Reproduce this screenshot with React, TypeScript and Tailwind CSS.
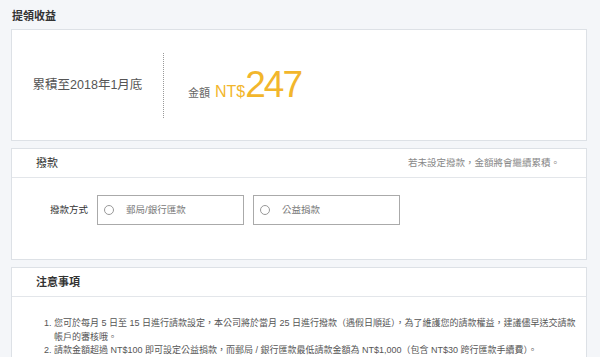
export default function App() {
  return (
    <div className="h-[357px] w-[600px] overflow-hidden bg-[#f4f6f9] pl-[11px] pr-[13px] text-[#333] [font-family:'Liberation_Sans','Noto_Sans_CJK_TC',sans-serif]">
      <h2 className="pl-px pt-[9px] pb-[5px] text-[11px] font-bold leading-[15px] text-[#333]">提領收益</h2>

      <section className="flex h-[112px] items-center border border-[#dde1e6] bg-white">
        <div className="flex w-[151px] justify-center text-[12.5px] text-[#555]">累積至2018年1月底</div>
        <div className="h-[65px] border-l border-dotted border-[#999]" />
        <div className="flex items-baseline pl-[24px] text-[#f2b62c]">
          <span className="text-[11px] text-[#666]">金額</span>
          <span className="ml-[5px] text-[16px]">NT$</span>
          <span className="text-[37px] leading-none tracking-[-2px]">247</span>
        </div>
      </section>

      <section className="mt-[7px] h-[112px] border border-[#dde1e6] bg-white">
        <div className="flex h-[29px] items-center justify-between border-b border-[#e3e6ea] pl-[24px] pr-[26px]">
          <span className="text-[11px] text-[#333]">撥款</span>
          <span className="text-[9.5px] text-[#888]">若未設定撥款，金額將會繼續累積。</span>
        </div>
        <div className="flex items-center pl-[38px] pt-[17px]">
          <span className="mr-[9px] text-[9.5px] text-[#333]">撥款方式</span>
          <div className="flex gap-[9px]">
            {["郵局/銀行匯款", "公益捐款"].map((label) => (
              <label
                key={label}
                className="flex h-[30px] w-[147px] items-center border border-[#aaa] pl-[6px] text-[9.5px] text-[#777]"
              >
                <span className="h-[10px] w-[10px] rounded-full border border-[#999]" />
                <span className="ml-[12px]">{label}</span>
              </label>
            ))}
          </div>
        </div>
      </section>

      <section className="mt-[7px] h-[120px] border border-[#dde1e6] bg-white">
        <div className="flex h-[29px] items-center border-b border-[#e3e6ea] pl-[24px]">
          <span className="text-[11px] font-bold text-[#333]">注意事項</span>
        </div>
        <ol className="w-[564px] list-decimal pl-[42px] pt-[20px] text-[9px] leading-[13.5px] text-[#555]">
          <li>
            您可於每月 5 日至 15 日進行請款設定，本公司將於當月 25 日進行撥款（遇假日順延），為了維護您的請款權益，建議儘早送交請款帳戶的審核哦。
          </li>
          <li>請款金額超過 NT$100 即可設定公益捐款，而郵局 / 銀行匯款最低請款金額為 NT$1,000（包含 NT$30 跨行匯款手續費）。</li>
        </ol>
      </section>
    </div>
  )
}
